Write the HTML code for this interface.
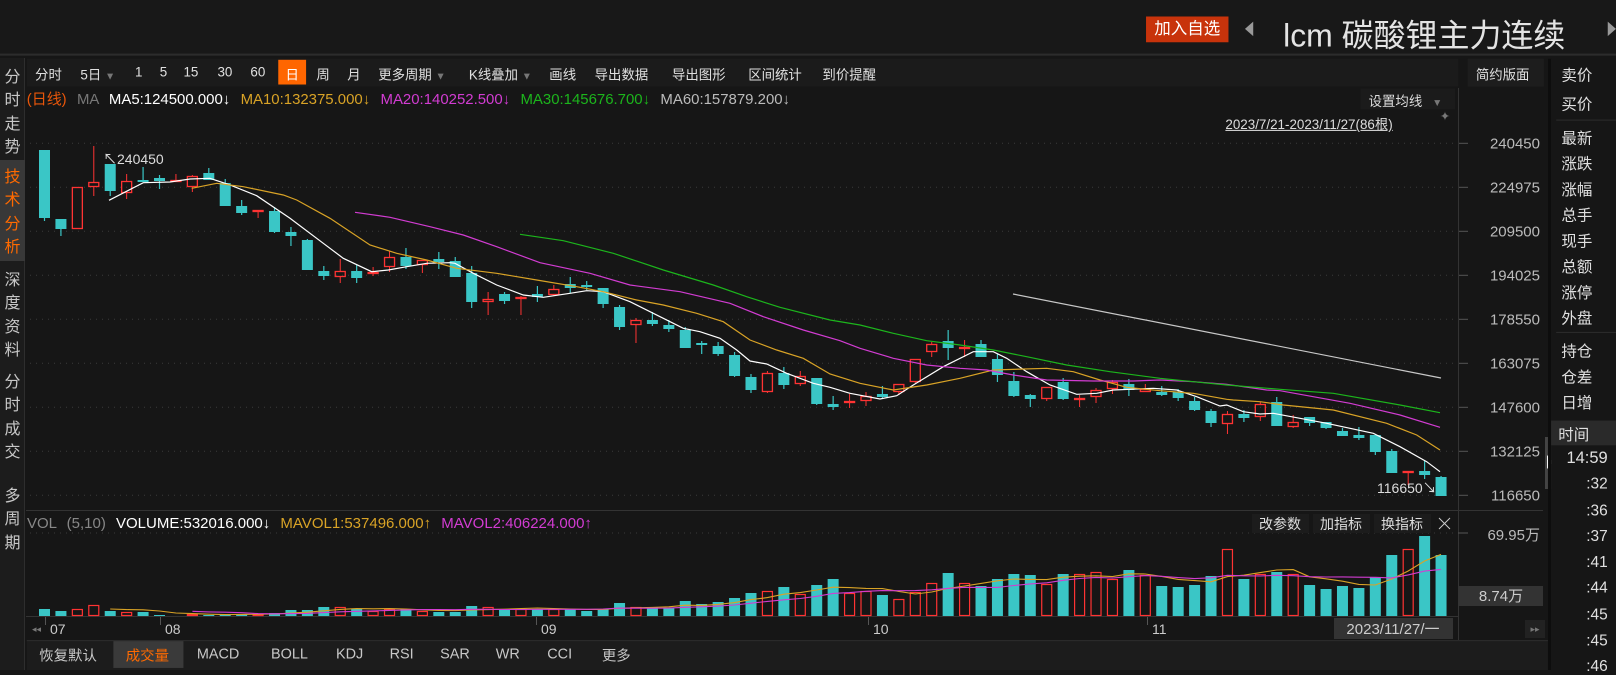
<!DOCTYPE html>
<html><head><meta charset="utf-8">
<style>
*{margin:0;padding:0;box-sizing:border-box}
body{width:1616px;height:670px;background:#161616;overflow:hidden;position:relative;font-family:"Liberation Sans","Noto Sans CJK SC",sans-serif;color:#ddd}
#w{position:absolute;left:0;top:0;width:1568px;height:650px;transform:scale(1.0306,1.0308);transform-origin:0 0}
.a{position:absolute;white-space:nowrap}
.tb{font-size:13px;color:#e0e0e0;top:62px}
.rp{font-size:15px;color:#e0e0e0;left:1515px}
.tm{font-size:15px;color:#e0e0e0;right:8px;text-align:right}
.lc{position:absolute;left:0;width:25px;text-align:center;font-size:16px;color:#c8c8c8;font-family:"Noto Sans CJK SC",sans-serif}
</style></head><body>
<svg id="s" width="1616" height="670" style="position:absolute;left:0;top:0" xmlns="http://www.w3.org/2000/svg"></svg>
<div id="w">
 <div class="a" style="left:0;top:0;width:1568px;height:54px;background:#181818;border-bottom:2px solid #2c2c2c"></div>
 <div class="a" style="left:1112px;top:16px;width:80px;height:25px;background:#c8330b;color:#fff;font-size:16px;line-height:25px;text-align:center">加入自选</div>
 <div class="a" style="left:1208px;top:21px;width:0;height:0;border-top:7px solid transparent;border-bottom:7px solid transparent;border-right:8px solid #999"></div>
 <div class="a" style="left:1245px;top:9px;font-size:31px;color:#e4e4e4">lcm 碳酸锂主力连续</div>
 <div class="a" style="left:1560px;top:21px;width:0;height:0;border-top:7px solid transparent;border-bottom:7px solid transparent;border-left:8px solid #999"></div>

 <div class="a" style="left:26px;top:57px;width:1389px;height:27px;background:#1b1b1b"></div>
 <div class="a" style="left:270px;top:58px;width:27px;height:24px;background:#ff6600"></div>
 <div class="a tb" style="left:34px">分时</div>
 <div class="a tb" style="left:78px">5日 <span style="color:#777;font-size:10px">▼</span></div>
 <div class="a tb" style="left:131px">1</div>
 <div class="a tb" style="left:155px">5</div>
 <div class="a tb" style="left:178px">15</div>
 <div class="a tb" style="left:211px">30</div>
 <div class="a tb" style="left:243px">60</div>
 <div class="a tb" style="left:277px;color:#fff">日</div>
 <div class="a tb" style="left:307px">周</div>
 <div class="a tb" style="left:337px">月</div>
 <div class="a tb" style="left:367px">更多周期 <span style="color:#777;font-size:10px">▼</span></div>
 <div class="a tb" style="left:455px">K线叠加 <span style="color:#777;font-size:10px">▼</span></div>
 <div class="a tb" style="left:533px">画线</div>
 <div class="a tb" style="left:577px">导出数据</div>
 <div class="a tb" style="left:652px">导出图形</div>
 <div class="a tb" style="left:726px">区间统计</div>
 <div class="a tb" style="left:798px">到价提醒</div>
 <div class="a" style="left:1424px;top:57px;width:74px;height:27px;background:#1d1d1d"></div>
 <div class="a tb" style="left:1432px">简约版面</div>

 <div class="a" style="left:26px;top:85px;font-size:14.5px;color:#ccc;word-spacing:6px"><span style="color:#e8560a">(日线)</span> <span style="color:#777">MA</span> <span style="color:#fff">MA5:124500.000↓</span> <span style="color:#d9a326">MA10:132375.000↓</span> <span style="color:#d23cd2">MA20:140252.500↓</span> <span style="color:#1cb51c">MA30:145676.700↓</span> <span style="color:#bbb">MA60:157879.200↓</span></div>
 <div class="a" style="left:1320px;top:86px;width:92px;height:20px;background:#1b1b1b"></div>
 <div class="a" style="left:1328px;top:88px;font-size:13px;color:#ddd">设置均线 <span style="color:#777;font-size:10px;margin-left:6px">▼</span></div>
 <div class="a" style="left:1189px;top:110px;font-size:13px;color:#ddd;text-decoration:underline">2023/7/21-2023/11/27(86根)</div>
 <div class="a" style="left:1397px;top:106px;font-size:12px;color:#777">✦</div>

 <div class="a" style="left:1502px;top:57px;width:3px;height:593px;background:#0d0d0d"></div>
 <div class="a" style="left:1505px;top:57px;width:63px;height:593px;background:#161616"></div>
 <div class="a rp" style="top:62px">卖价</div>
 <div class="a rp" style="top:90px">买价</div>
 <div class="a" style="left:1510px;top:116px;width:58px;height:1px;background:#2c2c2c"></div>
 <div class="a rp" style="top:123px">最新</div>
 <div class="a rp" style="top:148px">涨跌</div>
 <div class="a rp" style="top:173px">涨幅</div>
 <div class="a rp" style="top:198px">总手</div>
 <div class="a rp" style="top:223px">现手</div>
 <div class="a rp" style="top:248px">总额</div>
 <div class="a rp" style="top:273px">涨停</div>
 <div class="a rp" style="top:298px">外盘</div>
 <div class="a" style="left:1510px;top:322px;width:58px;height:1px;background:#2c2c2c"></div>
 <div class="a rp" style="top:330px">持仓</div>
 <div class="a rp" style="top:355px">仓差</div>
 <div class="a rp" style="top:380px">日增</div>
 <div class="a" style="left:1505px;top:408px;width:63px;height:24px;background:#2a2a2a"></div>
 <div class="a rp" style="top:411px;left:1512px">时间</div>
 <div class="a tm" style="top:436px;font-size:16px">14:59</div>
 <div class="a tm" style="top:461px">:32</div>
 <div class="a tm" style="top:487px">:36</div>
 <div class="a tm" style="top:512px">:37</div>
 <div class="a tm" style="top:537px">:41</div>
 <div class="a tm" style="top:562px">:44</div>
 <div class="a tm" style="top:588px">:45</div>
 <div class="a tm" style="top:613px">:45</div>
 <div class="a tm" style="top:638px">:46</div>

 <div class="a" style="left:26px;top:621px;width:1476px;height:29px;background:#1c1c1c;border-top:1px solid #2c2c2c"></div>
 <div class="a" style="left:110px;top:622px;width:68px;height:26px;background:#3a3a3a"></div>
 <div class="a" style="left:38px;top:626px;font-size:14px;color:#c8c8c8">恢复默认</div>
 <div class="a" style="left:122px;top:626px;font-size:14px;color:#ff6a00">成交量</div>
 <div class="a" style="left:191px;top:626px;font-size:14px;color:#c8c8c8">MACD</div>
 <div class="a" style="left:263px;top:626px;font-size:14px;color:#c8c8c8">BOLL</div>
 <div class="a" style="left:326px;top:626px;font-size:14px;color:#c8c8c8">KDJ</div>
 <div class="a" style="left:378px;top:626px;font-size:14px;color:#c8c8c8">RSI</div>
 <div class="a" style="left:427px;top:626px;font-size:14px;color:#c8c8c8">SAR</div>
 <div class="a" style="left:481px;top:626px;font-size:14px;color:#c8c8c8">WR</div>
 <div class="a" style="left:531px;top:626px;font-size:14px;color:#c8c8c8">CCI</div>
 <div class="a" style="left:584px;top:626px;font-size:14px;color:#c8c8c8">更多</div>
</div>

<div class="a" style="left:0;top:58px;width:25px;height:612px;background:#1c1c1c;border-right:1px solid #2e2e2e"></div>
<div class="a" style="left:0;top:160px;width:25px;height:101px;background:#383838"></div>
<div class="lc" style="top:64px;line-height:23.3px">分<br>时<br>走<br>势</div>
<div class="lc" style="top:164px;line-height:23.3px;color:#ff6a00">技<br>术<br>分<br>析</div>
<div class="lc" style="top:267px;line-height:23.3px">深<br>度<br>资<br>料</div>
<div class="lc" style="top:369px;line-height:23.3px">分<br>时<br>成<br>交</div>
<div class="lc" style="top:483px;line-height:23.3px">多<br>周<br>期</div>

<script>
var S=document.getElementById('s'),h='';
function L(x1,y1,x2,y2,c,e){h+='<line x1="'+x1+'" y1="'+y1+'" x2="'+x2+'" y2="'+y2+'" stroke="'+c+'" '+(e||'')+'/>';}
function T(x,y,t,c,sz,anc,ex){h+='<text x="'+x+'" y="'+y+'" fill="'+c+'" font-size="'+sz+'" text-anchor="'+(anc||'start')+'" '+(ex||'')+' font-family="Liberation Sans,Noto Sans CJK SC,sans-serif">'+t+'</text>';}
var pl=['240450','224975','209500','194025','178550','163075','147600','132125','116650'];
for(var k=0;k<9;k++){var y=143.3+44*k;L(30,y,1458,y,'#3a3a3a','stroke-dasharray="1,5"');L(1458,y,1468,y,'#555');T(1540,y+5,pl[k],'#bbb',15,'end');}
L(1458.5,88,1458.5,640,'#333');
L(26,510.5,1543,510.5,'#333');
L(26,616.5,1458,616.5,'#333');
L(30,533,1458,533,'#3a3a3a','stroke-dasharray="1,5"');L(1458,533,1468,533,'#555');
T(1540,540,'69.95万','#bbb',15,'end');
h+='<rect x="1459" y="586" width="84" height="20" fill="#333"/>';T(1501,601,'8.74万','#ccc',15,'middle');
h+='<rect x="1545" y="437" width="7" height="52" fill="#444"/>';
h+='<path d="M1547 455 L1553 462 L1547 469Z" fill="#fff"/>';
var C=[['c',150,218,150,221],['c',219,229,219,236],['r',187,229,187,229],['r',182,187,146,196],['c',164,191,164,196],['r',181,193,174,199],['c',180,182,167,182],['c',178,181,175,189],['r',180,182,174,182],['r',176,187,175,192],['c',173,180,168,180],['c',183,206,179,206],['c',206,213,200,215],['r',210,211,210,218],['c',211,232,207,233],['c',232,236,227,246],['c',240,270,239,270],['c',271,276,266,280],['r',271,277,259,283],['c',271,278,265,283],['r',272,274,267,276],['r',257,267,251,272],['c',257,266,248,269],['r',260,265,260,273],['c',259,262,252,269],['c',261,277,257,277],['c',273,302,266,308],['r',299,302,292,315],['c',294,301,292,304],['r',297,299,296,315],['c',294,297,286,302],['r',289,295,285,296],['c',284,288,277,293],['c',285,287,281,290],['c',288,304,288,308],['c',307,327,305,330],['r',320,325,318,343],['c',320,324,312,326],['c',325,329,320,332],['c',330,348,327,348],['c',343,345,341,354],['c',346,354,342,356],['c',355,376,352,377],['c',377,390,374,393],['r',373,392,371,393],['c',373,385,367,389],['r',376,384,371,386],['c',378,404,378,405],['c',404,407,396,410],['r',401,402,394,408],['r',396,401,392,406],['c',394,397,386,399],['r',384,392,384,395],['r',359,382,359,383],['r',344,352,342,357],['c',341,348,330,360],['r',347,349,340,357],['c',344,357,340,357],['c',359,375,354,382],['c',381,396,372,397],['c',395,399,394,407],['r',387,399,387,401],['c',382,399,378,400],['r',398,400,395,407],['r',390,397,388,403],['r',382,389,380,394],['c',384,390,379,396],['r',389,392,384,392],['c',392,395,386,396],['c',392,398,389,401],['c',401,410,397,411],['c',411,423,409,427],['r',414,424,411,434],['c',414,418,410,422],['r',404,417,402,421],['c',402,426,397,426],['r',422,427,415,428],['c',417,423,417,426],['c',422,428,422,429],['c',431,436,428,436],['c',435,438,427,440],['c',435,452,435,455],['c',451,473,449,473],['r',471,472,471,485],['c',471,475,461,479],['c',477,496,476,496]];
var V=[7,5,7,11,5,4,4,1,1,2,1,2,2,2,3,6,6,9,9,7,5,7,7,5,4,4,10,9,7,7,7,7,7,5,7,13,9,9,8,15,12,14,18,23,25,29,22,31,37,23,25,21,17,24,33,43,33,30,37,42,41,32,42,42,44,37,46,41,30,29,31,40,67,37,42,44,42,31,27,30,28,39,61,67,80,61];
var RED='#ff3333',CY='#3ac6c6';
function X(i){return 44.5+16.43*i;}
for(var i=0;i<86;i++){var c=C[i],x=X(i),col=c[0]=='r'?RED:CY;
 var t=c[1],b=c[2];if(b-t<2){b=t+2;}
 if(c[0]=='r'){
  if(c[3]<t)L(x,c[3],x,t,col);if(c[4]>b)L(x,b,x,c[4],col);
  h+='<rect x="'+(x-5)+'" y="'+(t+0.5)+'" width="10" height="'+(b-t-1)+'" fill="none" stroke="'+col+'" stroke-width="1.3"/>';
 }else{L(x,c[3],x,c[4],col,'stroke-width="1.2"');h+='<rect x="'+(x-5.5)+'" y="'+t+'" width="11" height="'+(b-t)+'" fill="'+col+'"/>';}
 var vt=616-V[i];
 if(c[0]=='r')h+='<rect x="'+(x-5)+'" y="'+(vt+0.5)+'" width="10" height="'+(V[i]-1)+'" fill="none" stroke="'+col+'" stroke-width="1.2"/>';
 else h+='<rect x="'+(x-5.5)+'" y="'+vt+'" width="11" height="'+V[i]+'" fill="'+col+'"/>';
}
function P(segs,col){var pts=[];segs.forEach(function(s){var ox=s[0],oy=s[1];for(var j=2;j<s.length;j+=2){pts.push([ox+s[j]/3,oy+s[j+1]/3]);}});
 pts.sort(function(a,b){return a[0]-b[0]});
 var o=[],lx=-1;pts.forEach(function(p){if(p[0]>lx+2){o.push(p[0].toFixed(1)+','+p[1].toFixed(1));lx=p[0];}});
 h+='<polyline points="'+o.join(' ')+'" fill="none" stroke="'+col+'" stroke-width="1.2"/>';}
P([[30,130,237,211,340,158,420,156,480,147,540,145,600,165,680,197,780,265,880,340,940,385,1025,425,1075,420,1130,410,1190,400,1260,398],
[430,220,75,130,130,160,200,195,280,225,340,232,420,220,470,212,520,215,600,245,700,295,760,325,810,335,870,355,920,390,960,423,1010,432,1070,460,1150,490,1200,502,1260,520,1350,537],
[860,300,60,297,110,287,160,255,250,200,340,155,400,155,440,175,500,215,570,255,650,283,710,280,760,270,880,265,950,270,1010,290,1080,318,1150,335,1200,342],
[1200,380,80,75,220,100,380,130,520,160,600,200,680,245,720,275]],'#ffffff');
P([[30,130,485,175,560,160,640,170,760,195,800,210,900,265,1020,345,1100,370,1190,390],
[430,220,80,145,200,160,320,180,440,200,520,215,620,240,700,255,800,280,880,305,960,360,1040,390,1120,415,1200,462,1290,490],
[860,300,100,270,200,255,300,235,400,210,560,205,640,215,720,240,800,262,900,272,1000,280,1100,298,1200,305],
[1200,380,100,60,250,75,400,90,560,130,650,165,720,210]],'#d9a326');
P([[30,130,975,247,1080,262,1200,290],
[430,220,100,45,200,80,330,128,480,160,600,195,750,215,900,250,1000,290,1120,330,1230,362],
[860,300,0,145,100,175,200,195,300,205,380,210,460,225,560,240,700,243,820,243,900,240,1000,245,1100,253,1260,272],
[1200,380,200,30,450,70,600,105,720,142]],'#d23cd2');
P([[430,220,270,43,400,62,550,100,700,150,850,195,950,230,1050,262,1200,300],
[860,300,0,75,100,100,200,122,300,135,400,150,500,170,620,195,750,215,900,235,1000,245,1100,255,1260,268],
[1200,380,400,40,600,75,720,98]],'#1cb51c');
L(1013,294,1441,378,'#c8c8c8','stroke-width="1.2"');
function vma(n,col){var o=[];for(var i=n-1;i<86;i++){var s=0;for(var j=0;j<n;j++)s+=V[i-j];o.push(X(i).toFixed(1)+','+(616-s/n).toFixed(1));}h+='<polyline points="'+o.join(' ')+'" fill="none" stroke="'+col+'" stroke-width="1.1"/>';}
vma(5,'#d9a326');vma(10,'#d23cd2');
T(103,164,'↖240450','#ddd',14);
T(1377,493,'116650↘','#ddd',14);
T(27,528,'<tspan fill="#888">VOL (5,10)</tspan> <tspan fill="#fff">VOLUME:532016.000↓</tspan> <tspan fill="#d9a326">MAVOL1:537496.000↑</tspan> <tspan fill="#d23cd2">MAVOL2:406224.000↑</tspan>','#fff',15,'start','word-spacing="6"');
['改参数','加指标','换指标'].forEach(function(t,k){var x=1252+k*61;h+='<rect x="'+x+'" y="514" width="57" height="19" fill="#1c1c1c"/>';T(x+28,529,t,'#ddd',14,'middle');});
L(1439,518,1450,529,'#ccc');L(1450,518,1439,529,'#ccc');
[[50,'07'],[165,'08'],[541,'09'],[873,'10'],[1152,'11']].forEach(function(d){L(d[0]-4.5,617,d[0]-4.5,625,'#555');T(d[0],634,d[1],'#ccc',14);});
T(32,632,'◂◂','#777',9);
h+='<rect x="1334" y="618" width="119" height="21" fill="#333"/>';T(1393,634,'2023/11/27/一','#ccc',15,'middle');
h+='<rect x="1525" y="620" width="20" height="18" fill="#222"/>';T(1535,632,'▸▸','#777',9,'middle');
S.innerHTML=h;
</script>
</body></html>
